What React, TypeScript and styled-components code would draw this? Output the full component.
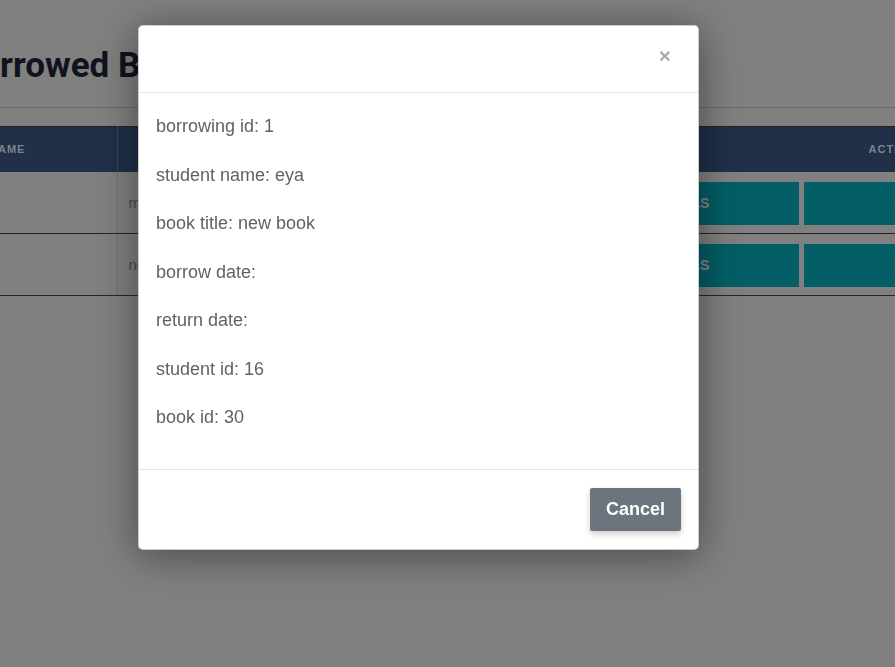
import React from 'react';
import styled, { createGlobalStyle } from 'styled-components';

// The page behind the modal is drawn with its colours already dimmed
// (as they look under the modal backdrop), and the backdrop only holds the dialog.
const GlobalStyle = createGlobalStyle`
  html, body {
    margin: 0;
    padding: 0;
    background: #808080;
    overflow: hidden;
  }
  * {
    box-sizing: border-box;
  }
`;

type Borrowing = {
  id: number;
  studentName: string;
  bookTitle: string;
  borrowDate: string;
  returnDate: string;
  studentId: number;
  bookId: number;
};

const borrowings: Borrowing[] = [
  { id: 1, studentName: 'eya', bookTitle: 'my book', borrowDate: '', returnDate: '', studentId: 16, bookId: 30 },
  { id: 2, studentName: 'eya', bookTitle: 'new book', borrowDate: '', returnDate: '', studentId: 16, bookId: 31 },
];

const selected: Borrowing = { ...borrowings[0], bookTitle: 'new book' };

const App = () => {
  return (
    <>
      <GlobalStyle />
      <Viewport>
        <Page>
          <Title>Borrowed Books</Title>
          <Divider />
          <Table>
            <colgroup>
              <col style={{ width: 203 }} />
              <col style={{ width: 180 }} />
              <col style={{ width: 130 }} />
              <col style={{ width: 121 }} />
              <col style={{ width: 719 }} />
            </colgroup>
            <thead>
              <tr>
                <Th>Student Name</Th>
                <Th $align="center">Book Title</Th>
                <Th $align="center">Borrow Date</Th>
                <Th $align="center">Return Date</Th>
                <ActionsTh>Actions</ActionsTh>
              </tr>
            </thead>
            <tbody>
              {borrowings.map((b) => (
                <tr key={b.id}>
                  <Td>{b.studentName}</Td>
                  <Td>{b.bookTitle}</Td>
                  <Td>{b.borrowDate}</Td>
                  <Td>{b.returnDate}</Td>
                  <ActionCell>
                    <Actions>
                      <ActionButton>Details</ActionButton>
                      <ActionButton>Edit</ActionButton>
                      <ActionButton>Delete</ActionButton>
                    </Actions>
                  </ActionCell>
                </tr>
              ))}
            </tbody>
          </Table>
        </Page>
      </Viewport>

      <Backdrop>
        <Dialog>
          <ModalHeader>
            <CloseButton aria-label="close">×</CloseButton>
          </ModalHeader>
          <ModalBody>
            <Info>borrowing id: {selected.id}</Info>
            <Info>student name: {selected.studentName}</Info>
            <Info>book title: {selected.bookTitle}</Info>
            <Info>borrow date: {selected.borrowDate}</Info>
            <Info>return date: {selected.returnDate}</Info>
            <Info>student id: {selected.studentId}</Info>
            <Info>book id: {selected.bookId}</Info>
          </ModalBody>
          <ModalFooter>
            <CancelButton>Cancel</CancelButton>
          </ModalFooter>
        </Dialog>
      </Backdrop>
    </>
  );
};

export default App;

const Viewport = styled.div`
  width: 100%;
  height: 100vh;
  overflow: hidden;
`;

const Page = styled.div`
  margin-left: -86px;
  width: 1400px;
  padding-top: 44px;
`;

const Title = styled.h1`
  margin: 0;
  padding-left: 44px;
  font-family: Roboto, 'Noto Sans', sans-serif;
  font-size: 35px;
  line-height: 44px;
  font-weight: 700;
  color: #10121d;
`;

const Divider = styled.div`
  margin-top: 19px;
  height: 1px;
  background: #6b6b6b;
`;

const Table = styled.table`
  margin-top: 18px;
  border-collapse: collapse;
  table-layout: fixed;
  width: 1353px;
  font-family: 'Liberation Sans', Arial, sans-serif;
`;

const Th = styled.th<{ $align?: 'left' | 'center' }>`
  height: 45px;
  padding: 0 12px;
  background: #1f3048;
  border-top: 1px solid #222;
  border-right: 1px solid #34465f;
  color: #7d848d;
  font-size: 11px;
  font-weight: 700;
  letter-spacing: 1px;
  text-transform: uppercase;
  text-align: ${({ $align }) => $align ?? 'left'};
  white-space: nowrap;
`;

const ActionsTh = styled(Th)`
  padding: 0 34px 0 12px;
  text-align: center;
  border-right: none;
`;

const Td = styled.td`
  padding: 0 11px;
  border-right: 1px solid #727272;
  border-bottom: 1px solid #262626;
  color: #4c4c4c;
  font-size: 15px;
  vertical-align: middle;
  white-space: nowrap;
  overflow: hidden;
`;

const ActionCell = styled.td`
  padding: 10px 12px 8px;
  border-bottom: 1px solid #262626;
`;

const Actions = styled.div`
  display: flex;
  gap: 5px;
`;

const ActionButton = styled.button`
  height: 43px;
  padding: 0 90px;
  border: none;
  border-radius: 0;
  background: #035e66;
  color: #858585;
  font-family: 'Liberation Sans', Arial, sans-serif;
  font-size: 14px;
  font-weight: 700;
  text-transform: uppercase;
  white-space: nowrap;
`;

const Backdrop = styled.div`
  position: fixed;
  inset: 0;
  z-index: 1000;
  padding: 25px 0 0 138px;
`;

const Dialog = styled.div`
  width: 561px;
  background: #fff;
  border: 1px solid rgba(0, 0, 0, 0.2);
  border-radius: 5px;
  box-shadow: 0 5px 40px rgba(0, 0, 0, 0.45);
  font-family: 'Liberation Sans', Arial, sans-serif;
  overflow: hidden;
`;

const ModalHeader = styled.div`
  height: 67px;
  display: flex;
  align-items: center;
  justify-content: flex-end;
  padding: 0 27px 8px 0;
  border-bottom: 1px solid #e3e3e3;
`;

const CloseButton = styled.button`
  padding: 0;
  border: none;
  background: none;
  font-family: 'Liberation Sans', Arial, sans-serif;
  font-size: 21px;
  font-weight: 700;
  line-height: 1;
  color: #000;
  opacity: 0.33;
`;

const ModalBody = styled.div`
  padding: 20px 17px 16px;
`;

const Info = styled.p`
  margin: 0 0 21.5px;
  font-size: 18px;
  line-height: 27px;
  color: #5f6266;
`;

const ModalFooter = styled.div`
  display: flex;
  justify-content: flex-end;
  padding: 18px 17px 18px;
  border-top: 1px solid #e3e3e3;
`;

const CancelButton = styled.button`
  height: 43px;
  padding: 0 16px;
  border: none;
  border-radius: 2px;
  background: #6c757d;
  color: #fff;
  font-family: 'Liberation Sans', Arial, sans-serif;
  font-size: 18px;
  font-weight: 700;
  box-shadow: 0 3px 6px rgba(0, 0, 0, 0.2);
`;
